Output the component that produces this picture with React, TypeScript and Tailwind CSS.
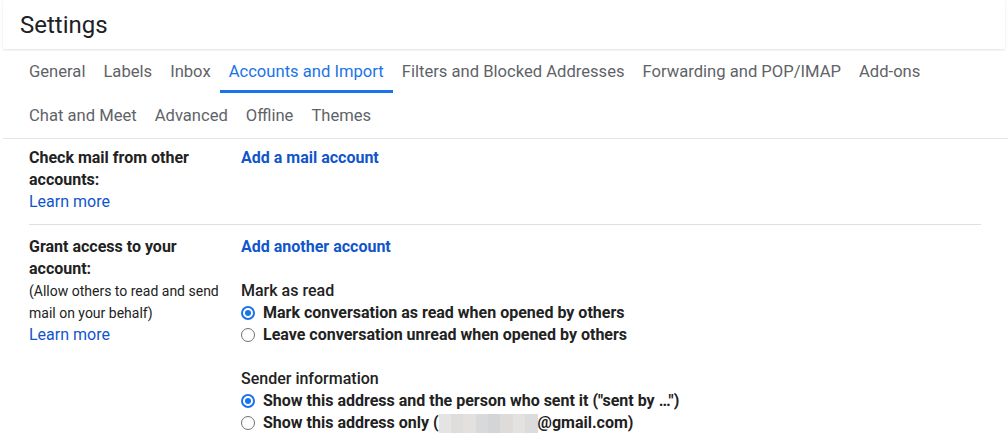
import React from "react";

const tabsRow1 = [
  "General",
  "Labels",
  "Inbox",
  "Accounts and Import",
  "Filters and Blocked Addresses",
  "Forwarding and POP/IMAP",
  "Add-ons",
];
const tabsRow2 = ["Chat and Meet", "Advanced", "Offline", "Themes"];

function Tab({ label, active }: { label: string; active?: boolean }) {
  return (
    <div
      className={`relative flex h-[44px] items-center px-[9px] text-[16.6px] ${
        active ? "text-[#1a73e8]" : "text-[#5f6368]"
      }`}
    >
      {label}
      {active && (
        <div className="absolute bottom-[1px] left-0 right-0 h-[3px] bg-[#1a73e8]" />
      )}
    </div>
  );
}

function Radio({ checked }: { checked?: boolean }) {
  return checked ? (
    <span className="flex h-[14px] w-[14px] shrink-0 items-center justify-center rounded-full border-2 border-[#1a73e8]">
      <span className="h-[6px] w-[6px] rounded-full bg-[#1a73e8]" />
    </span>
  ) : (
    <span className="h-[14px] w-[14px] shrink-0 rounded-full border border-[#6f6f6f]" />
  );
}

function Option({ checked, children }: { checked?: boolean; children: React.ReactNode }) {
  return (
    <div className="flex h-[22px] items-center gap-[8px]">
      <Radio checked={checked} />
      <span className="font-bold text-[#222]">{children}</span>
    </div>
  );
}

function Blurred() {
  const blocks = ["#e4e4e4", "#dedddc", "#e2e1df", "#d8d9da", "#d4d5d7", "#dedcdb", "#e4e2e0", "#dcdcdc"];
  return (
    <span className="inline-flex h-[19px] w-[99px] align-middle">
      {blocks.map((c, i) => (
        <span key={i} className="h-full flex-1" style={{ backgroundColor: c }} />
      ))}
    </span>
  );
}

export default function App() {
  return (
    <div className="h-[443px] w-[1008px] overflow-hidden bg-white font-['Roboto',_'Liberation_Sans',_sans-serif]">
      <div className="mx-[3px] flex h-[49px] items-center pl-[17px] text-[24px] text-[#202124] shadow-[0_1px_2px_rgba(0,0,0,0.12)]">
        Settings
      </div>

      <div className="pl-[20px] pt-[1px]">
        <div className="flex">
          {tabsRow1.map((t) => (
            <Tab key={t} label={t} active={t === "Accounts and Import"} />
          ))}
        </div>
        <div className="flex">
          {tabsRow2.map((t) => (
            <Tab key={t} label={t} />
          ))}
        </div>
      </div>
      <div className="ml-[3px] h-px bg-[#e5e5e5]" />

      <div className="ml-[29px] mr-[27px] text-[16px] leading-[22px]">
        <div className="flex border-b border-[#e0e0e0] pb-[11px] pt-[8px]">
          <div className="w-[212px] shrink-0">
            <div className="font-bold text-[#222]">
              Check mail from other
              <br />
              accounts:
            </div>
            <div className="text-[#15c]">Learn more</div>
          </div>
          <div className="font-bold text-[#15c]">Add a mail account</div>
        </div>

        <div className="flex pt-[11px]">
          <div className="w-[212px] shrink-0">
            <div className="font-bold text-[#222]">
              Grant access to your
              <br />
              account:
            </div>
            <div className="text-[14px] text-[#222]">
              (Allow others to read and send
              <br />
              mail on your behalf)
            </div>
            <div className="text-[#15c]">Learn more</div>
          </div>
          <div>
            <div className="font-bold text-[#15c]">Add another account</div>
            <div className="mt-[22px] font-medium text-[#222]">Mark as read</div>
            <Option checked>Mark conversation as read when opened by others</Option>
            <Option>Leave conversation unread when opened by others</Option>
            <div className="mt-[22px] font-medium text-[#222]">Sender information</div>
            <Option checked>Show this address and the person who sent it ("sent by …")</Option>
            <Option>
              Show this address only (<Blurred />
              @gmail.com)
            </Option>
          </div>
        </div>
      </div>
    </div>
  );
}
